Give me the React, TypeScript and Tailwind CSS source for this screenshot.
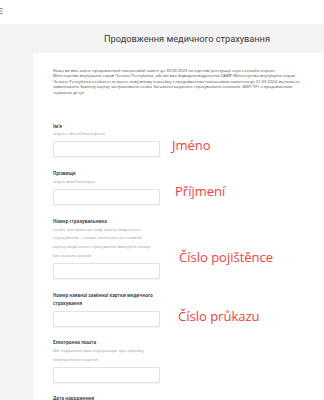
import React from 'react';

const font = { fontFamily: '"Open Sans", "Liberation Sans", sans-serif' };

interface Field {
  label: string[];
  hint: string[];
  tag?: string;
  tagClass?: string;
}

const fields: Field[] = [
  { label: ["Ім'я"], hint: ['згідно з візою/паспортом'], tag: 'Jméno', tagClass: 'mt-[15.5px] ml-[12px]' },
  { label: ['Прізвище'], hint: ['згідно візи/паспорта'], tag: 'Příjmení', tagClass: 'mt-[14px] ml-[15px]' },
  {
    label: ['Номер страхувальника'],
    hint: [
      'особи, яка вимагає нову картку медичного',
      'страхування – номер зазначено на наявній',
      'картці медичного страхування (вказуйте номер',
      'без похилої риски)',
    ],
    tag: 'Číslo pojištěnce',
    tagClass: 'mt-[32px] ml-[19px]',
  },
  {
    label: ['Номер наявної замінної картки медичного', 'страхування'],
    hint: [],
    tag: 'Číslo průkazu',
    tagClass: 'mt-[17.5px] ml-[18px]',
  },
  { label: ['Електронна пошта'], hint: ['Ми надішлемо вам інформацію про обробку', 'електронною поштою'] },
];

const intro = [
  'Якщо ви вже маєте продовжений тимчасовий захист до 30.09.2023 на підставі реєстрації через онлайн-портал',
  'Міністерства внутрішніх справ Чеської Республіки, або ви вже відвідали відділення OAMP Міністерства внутрішніх справ',
  'Чеської Республіки особисто та маєте нову візову наклейку з продовженим тимчасовим захистом до 31.03.2024, ви можете',
  'завантажити Замінну картку застрахованої особи Загальної медичної страхувальної компанії «ВЗП ЧР» з продовженим',
  'терміном дії тут.',
];

function FormRow({ field }: { field: Field }) {
  return (
    <div className="flex items-start">
      <div className="w-[107px] shrink-0">
        {field.label.map((l) => (
          <div key={l} className="whitespace-nowrap text-[4.4px] leading-[8.7px] font-bold text-[#444]">
            {l}
          </div>
        ))}
        {field.hint.map((h) => (
          <div key={h} className="whitespace-nowrap text-[4.2px] leading-[8.7px] text-[#999]">
            {h}
          </div>
        ))}
        <div className="mt-[2.5px] h-[16px] w-[107px] rounded-[1px] border border-[#e2e2e2] bg-white shadow-[0_1px_1px_rgba(0,0,0,0.04)]" />
      </div>
      {field.tag && (
        <div className={`whitespace-nowrap text-[13px] leading-[16px] text-[#ff3b3b] ${field.tagClass}`}>{field.tag}</div>
      )}
    </div>
  );
}

export default function App() {
  return (
    <div className="h-[400px] w-[324px] overflow-hidden bg-[#f3f3f3]" style={font}>
      <div className="flex h-[24px] items-start bg-white">
        <svg width="3" height="8" viewBox="0 0 3 8" className="mt-[8px]">
          <rect x="0" y="0" width="2.5" height="1" fill="#888" />
          <rect x="0" y="2.5" width="2.5" height="1" fill="#888" />
          <rect x="0" y="5" width="2.5" height="1" fill="#888" />
        </svg>
      </div>
      <div className="flex h-[29px] items-center justify-center pl-[50px]">
        <h1
          className="whitespace-nowrap text-[9.2px] leading-[14px] text-[#3a3a3a]"
          style={{ fontFamily: 'Roboto, "Open Sans", sans-serif' }}
        >
          Продовження медичного страхування
        </h1>
      </div>
      <div className="ml-[33px] h-[400px] bg-white pl-[20px] pt-[14.5px]">
        <div className="text-[4.1px] leading-[5.5px] text-[#4a4a4a]">
          {intro.map((line) => (
            <div key={line} className="whitespace-nowrap">
              {line}
            </div>
          ))}
        </div>
        <div className="mt-[26.5px] flex flex-col gap-[11.8px]">
          {fields.map((f) => (
            <FormRow key={f.label[0]} field={f} />
          ))}
          <div className="-mt-[0.5px] whitespace-nowrap text-[4.4px] leading-[8.7px] font-bold text-[#444]">Дата народження</div>
        </div>
      </div>
    </div>
  );
}
